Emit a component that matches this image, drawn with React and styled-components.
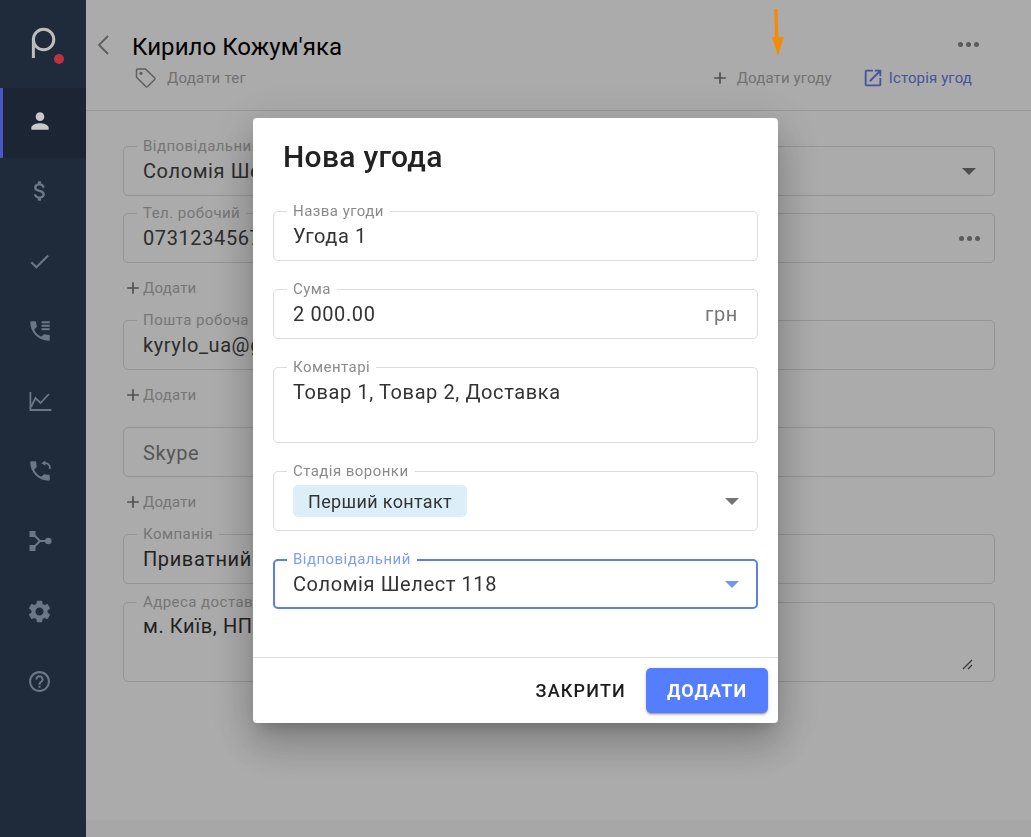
import React from "react";
import styled, { createGlobalStyle } from "styled-components";
import { MdPerson, MdAttachMoney, MdCheck, MdSettings, MdHelpOutline, MdOpenInNew, MdAdd } from "react-icons/md";

const Global = createGlobalStyle`
  html, body { margin: 0; padding: 0; height: 100%; background: #fff; }
  body { font-family: Roboto, "Noto Sans", sans-serif; overflow: hidden; }
  * { box-sizing: border-box; }
`;

const Page = styled.div`display: flex; height: 837px; width: 1031px; background: #fff;`;
const Sidebar = styled.nav`
  position: relative; z-index: 2; width: 86px; flex: none; background: #1f2b3a; display: flex; flex-direction: column;
`;
const LogoBox = styled.div`height: 88px; flex: none;`;
const NavItem = styled.div`
  height: 70px; display: flex; align-items: center; justify-content: center;
  color: ${p => (p.$active ? "#c9c9c9" : "#6b7786")};
  background: ${p => (p.$active ? "#1b2533" : "transparent")};
  border-left: 3px solid ${p => (p.$active ? "#4758c4" : "transparent")};
  padding: 0 10px 4px 0;
`;
const Main = styled.main`flex: 1; display: flex; flex-direction: column; min-width: 0;`;
const Header = styled.header`
  height: 111px; flex: none; border-bottom: 1px solid #e2e2e2; display: flex; justify-content: space-between;
  padding: 0 59px 0 10px;
`;
const HeadLeft = styled.div`display: flex; gap: 19px; padding-top: 32px;`;
const BackBtn = styled.div`width: 17px; padding-top: 2px; color: #8c8c8c;`;
const HeadText = styled.div`display: flex; flex-direction: column;`;
const Title = styled.h1`margin: 0; font-size: 24px; line-height: 30px; font-weight: 400; color: #000; letter-spacing: .05px; white-space: nowrap;`;
const TagRow = styled.div`display: flex; align-items: center; gap: 10px; margin-top: 5px; padding-left: 3px; font-size: 15px; letter-spacing: .2px; color: #aaa;`;
const HeadRight = styled.div`display: flex; flex-direction: column; align-items: flex-end; padding-top: 37px;`;
const Dots = styled.div`display: flex; gap: 3px; margin-right: ${p => p.$mr || 0}px; height: 14px; align-items: center;`;
const Dot = styled.i`width: 5px; height: 5px; border-radius: 50%; background: #888;`;
const Actions = styled.div`display: flex; align-items: center; margin-top: 16px; gap: 30px;`;
const Action = styled.div`display: flex; align-items: center; gap: ${p => p.$gap}px; font-size: 15px; letter-spacing: .13px; color: ${p => p.$c}; white-space: nowrap;`;

const Form = styled.section`padding: 35px 36px 0 37px; display: flex; flex-direction: column;`;
const BgField = styled.div`
  position: relative; width: 100%; height: ${p => p.$h || 50}px; border: 1px solid #ddd; border-radius: 5px;
  display: flex; align-items: ${p => (p.$top ? "flex-start" : "center")}; justify-content: space-between;
  padding: ${p => (p.$top ? "11px 19px 0" : "0 19px")};
  margin-top: ${p => p.$mt || 0}px; font-size: 20px; letter-spacing: .6px;
`;
const BgValue = styled.span`white-space: nowrap; color: ${p => p.$c || "#444"};`;
const Placeholder = styled.span`padding-top: 2px; color: #828282;`;
const BgLabel = styled.span`
  position: absolute; top: -9px; left: 13px; padding: 0 6px; background: #fff; font-size: 15px; line-height: 17px;
  letter-spacing: .45px; color: #b0b0b0; white-space: nowrap;
`;
const AddRow = styled.div`display: flex; align-items: center; height: 20px; margin: 15px 0 22px 0; font-size: 15px; letter-spacing: .2px; color: #b0b0b0;`;
const Bottom = styled.div`flex: 1;`;
const Band = styled.div`height: 17px; background: #f9f9f9;`;

const Overlay = styled.div`
  position: fixed; inset: 0; background: rgba(0,0,0,.33); display: flex; justify-content: center; align-items: flex-start; padding-top: 118px;
`;
const Annotation = styled.svg`position: fixed; left: 768px; top: 8px;`;
const Modal = styled.div`
  width: 525px; height: 605px; background: #fff; border-radius: 4px; display: flex; flex-direction: column;
  box-shadow: 0 11px 15px -7px rgba(0,0,0,.2), 0 24px 38px 3px rgba(0,0,0,.14), 0 9px 46px 8px rgba(0,0,0,.12);
`;
const ModalTitle = styled.h2`margin: 0; padding: 21px 30px 0; height: 93px; font-size: 30px; line-height: 36px; font-weight: 500; color: #222; letter-spacing: .3px;`;
const ModalBody = styled.div`flex: 1; padding: 0 20px; display: flex; flex-direction: column; gap: 28px;`;
const Field = styled.div`
  position: relative; height: ${p => p.$h}px; border: ${p => (p.$focus ? "2px solid #5d80de" : "1px solid #dcdcdc")};
  border-radius: 5px; display: flex; justify-content: space-between;
  align-items: ${p => (p.$top ? "flex-start" : "center")};
  padding: ${p => (p.$top ? "12px 19px 0" : p.$focus ? "0 18px" : "0 19px")};
  font-size: 20px; letter-spacing: .6px; color: #333;
`;
const FieldLabel = styled.span`
  position: absolute; top: ${p => (p.$focus ? "-10px" : "-9px")}; left: ${p => (p.$focus ? "12px" : "13px")}; padding: 0 6px; background: #fff;
  font-size: 15px; line-height: 17px; letter-spacing: .45px; color: ${p => (p.$focus ? "#7e9ff0" : "#8a8a8a")}; white-space: nowrap;
`;
const Suffix = styled.span`color: #777;`;
const Chip = styled.span`display: inline-flex; align-items: center; height: 32px; padding: 0 15px; border-radius: 5px; background: #dceff8; color: #333; font-size: 18px; letter-spacing: .35px;`;
const Arrow = styled.span`
  width: 0; height: 0; border-left: 7px solid transparent; border-right: 7px solid transparent; margin-right: -1px;
  border-top: 7px solid ${p => p.$c || "#757575"};
`;
const ModalFooter = styled.footer`height: 66px; border-top: 1px solid #dedede; display: flex; justify-content: flex-end; padding: 10px 10px 0 0; gap: 20px;`;
const TextBtn = styled.button`
  border: 0; background: none; height: 45px; padding: 0; font: 500 18px Roboto, sans-serif; letter-spacing: 1.2px; color: #1c1c1c;
`;
const PrimaryBtn = styled.button`
  border: 0; background: #557eff; color: #fff; width: 122px; height: 45px; border-radius: 5px; font: 700 18px Roboto, sans-serif; letter-spacing: 1.1px;
  box-shadow: 0 3px 1px -2px rgba(0,0,0,.2), 0 2px 2px 0 rgba(0,0,0,.14), 0 1px 5px 0 rgba(0,0,0,.12);
`;
const Grip = styled.svg`position: absolute; right: 20px; bottom: 10px;`;

const phone = "M6.62 10.79c1.44 2.83 3.76 5.14 6.59 6.59l2.2-2.2c.27-.27.67-.36 1.02-.24 1.12.37 2.33.57 3.57.57.55 0 1 .45 1 1V20c0 .55-.45 1-1 1-9.39 0-17-7.61-17-17 0-.55.45-1 1-1h3.5c.55 0 1 .45 1 1 0 1.25.2 2.45.57 3.57.11.35.03.74-.25 1.02l-2.2 2.2z";

const Logo = () => (
  <svg width="86" height="88" viewBox="0 0 86 88">
    <circle cx="43.6" cy="39.5" r="10.2" fill="none" stroke="#bdbdbd" strokeWidth="3" />
    <path d="M33.4 39.5V58" fill="none" stroke="#bdbdbd" strokeWidth="3" />
    <circle cx="59" cy="59" r="5" fill="#bd3240" />
  </svg>
);
const PhoneList = () => (
  <svg width="26" height="26" viewBox="0 0 24 24" fill="currentColor">
    <path d={phone} /><rect x="13.5" y="3" width="7.5" height="1.9" /><rect x="13.5" y="6.2" width="7.5" height="1.9" /><rect x="13.5" y="9.4" width="7.5" height="1.9" />
  </svg>
);
const ChartIcon = () => (
  <svg width="24" height="24" viewBox="0 0 24 24" fill="none" stroke="currentColor" strokeWidth="1.8">
    <path d="M2.4 3v18h21" /><path d="M3 18l4.5-9 5 5L21 5" />
  </svg>
);
const PhoneBack = () => (
  <svg width="26" height="26" viewBox="0 0 24 24" fill="currentColor">
    <path d={phone} />
    <path d="M15.2 5.2a4.2 4.2 0 0 1 5.8 5" fill="none" stroke="currentColor" strokeWidth="1.6" />
    <path d="M13.2 4.8l3.6-2.2.3 4.4z" />
  </svg>
);
const FlowIcon = () => (
  <svg width="24" height="24" viewBox="0 0 24 24" fill="currentColor">
    <rect x="1.5" y="2" width="6" height="6" /><rect x="1.5" y="16" width="6" height="6" /><circle cx="20.3" cy="12" r="3.3" />
    <path d="M5 5l7 7h8M12 12l-7 7" fill="none" stroke="currentColor" strokeWidth="2" />
  </svg>
);
const TagIcon = () => (
  <svg width="22" height="22" viewBox="0 0 22 22" fill="none" stroke="#8f8f8f" strokeWidth="1.5" strokeLinejoin="round">
    <path d="M1.5 3.2v7l9.3 9.3a1.3 1.3 0 0 0 1.8 0l7-7a1.3 1.3 0 0 0 0-1.8L10.3 1.9H2.8a1.3 1.3 0 0 0-1.3 1.3z" /><circle cx="6" cy="6.4" r=".9" />
  </svg>
);
const Chevron = () => (
  <svg width="14" height="22" viewBox="0 0 14 22" fill="none" stroke="currentColor" strokeWidth="1.8"><path d="M12 2L3 11l9 9" /></svg>
);

const nav = [
  [<MdPerson size={26} />, true], [<MdAttachMoney size={26} />], [<MdCheck size={25} />], [<PhoneList />], [<ChartIcon />],
  [<PhoneBack />], [<FlowIcon />], [<MdSettings size={27} />], [<MdHelpOutline size={25} />],
];

export default function App() {
  return (
    <>
      <Global />
      <Page>
        <Sidebar>
          <LogoBox><Logo /></LogoBox>
          {nav.map(([icon, active], i) => <NavItem key={i} $active={active}>{icon}</NavItem>)}
        </Sidebar>
        <Main>
          <Header>
            <HeadLeft>
              <BackBtn><Chevron /></BackBtn>
              <HeadText>
                <Title>Кирило Кожум'яка</Title>
                <TagRow><TagIcon />Додати тег</TagRow>
              </HeadText>
            </HeadLeft>
            <HeadRight>
              <Dots $mr={-7}><Dot /><Dot /><Dot /></Dots>
              <Actions>
                <Action $c="#aaa" $gap={7}><MdAdd size={20} color="#777" />Додати угоду</Action>
                <Action $c="#6a7de8" $gap={5}><MdOpenInNew size={22} color="#6a7de8" />Історія угод</Action>
              </Actions>
            </HeadRight>
          </Header>
          <Form>
            <BgField>
              <BgLabel>Відповідальний</BgLabel><BgValue>Соломія Ше</BgValue><Arrow $c="#757575" />
            </BgField>
            <BgField $mt={17}>
              <BgLabel>Тел. робочий</BgLabel><BgValue>0731234567</BgValue><Dots $mr={-5}><Dot /><Dot /><Dot /></Dots>
            </BgField>
            <AddRow><MdAdd size={20} color="#777" />Додати</AddRow>
            <BgField>
              <BgLabel>Пошта робоча</BgLabel><BgValue>kyrylo_ua@g</BgValue>
            </BgField>
            <AddRow><MdAdd size={20} color="#777" />Додати</AddRow>
            <BgField>
              <Placeholder>Skype</Placeholder>
            </BgField>
            <AddRow><MdAdd size={20} color="#777" />Додати</AddRow>
            <BgField>
              <BgLabel>Компанія</BgLabel><BgValue $c="#333">Приватний</BgValue>
            </BgField>
            <BgField $mt={18} $h={80} $top>
              <BgLabel>Адреса доставки</BgLabel><BgValue $c="#333">м. Київ, НП</BgValue>
              <Grip width="12" height="12" viewBox="0 0 12 12" stroke="#555" strokeWidth="1.2"><path d="M1 10L10 1M6 10l4-4" /></Grip>
            </BgField>
          </Form>
          <Bottom />
          <Band />
        </Main>
      </Page>
      <Overlay>
        <Modal>
          <ModalTitle>Нова угода</ModalTitle>
          <ModalBody>
            <Field $h={50}><FieldLabel>Назва угоди</FieldLabel>Угода 1</Field>
            <Field $h={50}><FieldLabel>Сума</FieldLabel>2 000.00<Suffix>грн</Suffix></Field>
            <Field $h={76} $top><FieldLabel>Коментарі</FieldLabel>Товар 1, Товар 2, Доставка</Field>
            <Field $h={60}><FieldLabel>Стадія воронки</FieldLabel><Chip>Перший контакт</Chip><Arrow /></Field>
            <Field $h={50} $focus><FieldLabel $focus>Відповідальний</FieldLabel>Соломія Шелест 118<Arrow $c="#6f96f0" /></Field>
          </ModalBody>
          <ModalFooter>
            <TextBtn>ЗАКРИТИ</TextBtn>
            <PrimaryBtn>ДОДАТИ</PrimaryBtn>
          </ModalFooter>
        </Modal>
      </Overlay>
      <Annotation width="18" height="50" viewBox="0 0 18 50">
        <path d="M7.8 1l1 32" stroke="#f58a07" strokeWidth="3.4" fill="none" /><path d="M4 29h11.7L10 48z" fill="#f58a07" />
      </Annotation>
    </>
  );
}
